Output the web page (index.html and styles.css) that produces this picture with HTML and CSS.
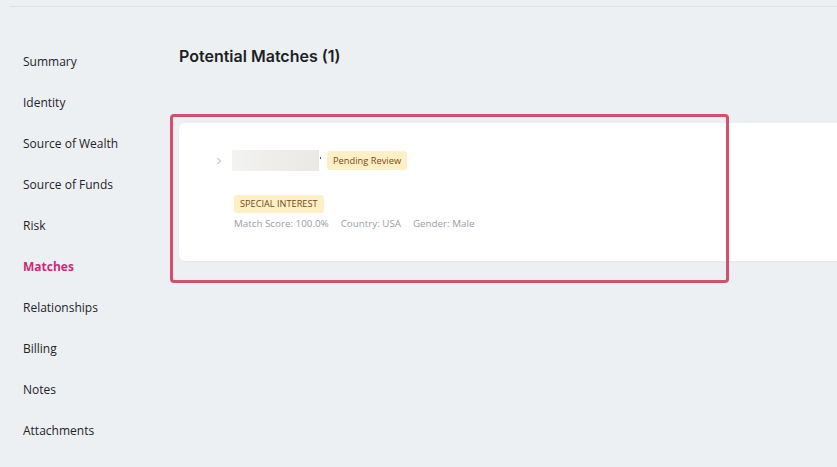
FILE: index.html
```html
<!DOCTYPE html>
<html lang="en">
<head>
    <meta charset="UTF-8">
    <meta name="viewport" content="width=device-width, initial-scale=1.0">
    <title>Matches</title>
    <link rel="stylesheet" href="styles.css">
</head>
<body>
    <div class="topbar"></div>
    <div class="layout">
        <nav class="sidebar">
            <a class="nav-item">Summary</a>
            <a class="nav-item">Identity</a>
            <a class="nav-item">Source of Wealth</a>
            <a class="nav-item">Source of Funds</a>
            <a class="nav-item">Risk</a>
            <a class="nav-item active">Matches</a>
            <a class="nav-item">Relationships</a>
            <a class="nav-item">Billing</a>
            <a class="nav-item">Notes</a>
            <a class="nav-item">Attachments</a>
        </nav>
        <main class="main">
            <h2 class="page-title">Potential Matches (1)</h2>
            <div class="matches">
                <div class="highlight"></div>
                <div class="match-card">
                    <div class="match-head">
                        <svg class="chevron" width="6" height="8" viewBox="0 0 6 8">
                            <polyline points="1.5,1 4.5,4 1.5,7" fill="none" stroke="#a3a7ad" stroke-width="1"/>
                        </svg>
                        <div class="name-blur"></div>
                        <span class="name-tail"></span>
                        <span class="badge">Pending Review</span>
                    </div>
                    <div class="match-body">
                        <span class="badge badge-caps">Special Interest</span>
                        <div class="meta">
                            <span>Match Score: 100.0%</span>
                            <span>Country: USA</span>
                            <span>Gender: Male</span>
                        </div>
                    </div>
                </div>
            </div>
        </main>
    </div>
</body>
</html>
```
FILE: styles.css
```css
body {
    font-family: "Open Sans", "Noto Sans", sans-serif;
    background-color: #edf0f3;
    margin: 0;
    height: 100vh;
    overflow: hidden;
    color: #1f2329;
}
.topbar {
    height: 6px;
    margin-left: 10px;
    border-bottom: 1px solid #dde0e4;
}
.layout {
    display: flex;
}
.sidebar {
    width: 156px;
    padding: 34px 0 0 23px;
    display: flex;
    flex-direction: column;
    flex-shrink: 0;
}
.nav-item {
    font-size: 12px;
    line-height: 41px;
    color: #1f2329;
}
.nav-item.active {
    color: #d0287a;
    font-weight: 700;
}
.main {
    flex: 1;
    padding-top: 37px;
    margin-right: -12px;
}
.page-title {
    margin: 0;
    font-family: Inter, sans-serif;
    font-size: 16px;
    line-height: 24px;
    font-weight: 600;
    color: #1c1f24;
}
.matches {
    position: relative;
    margin-top: 55px;
}
.highlight {
    position: absolute;
    top: -9px;
    left: -9px;
    width: 553px;
    height: 163px;
    border: 3px solid #d64f6a;
    border-radius: 4px;
    pointer-events: none;
}
.match-card {
    background: #fff;
    border-radius: 6px;
    padding: 27px 0 30px 37px;
    box-shadow: 0 1px 2px rgba(0, 0, 0, 0.03);
}
.match-head {
    display: flex;
    align-items: center;
    height: 21px;
}
.chevron {
    margin-right: 10px;
}
.name-blur {
    width: 87px;
    height: 21px;
    background: linear-gradient(90deg, #f3f3f2, #eeedea 50%, #ebe9e6);
    filter: blur(0.5px);
}
.name-tail {
    width: 1px;
    height: 2px;
    background: #555;
    margin: 0 6px 6px 1px;
}
.badge {
    display: inline-block;
    background: #fdf0c6;
    color: #7a4912;
    font-size: 9.3px;
    font-weight: 500;
    line-height: 19px;
    padding: 0 6px;
    border-radius: 3px;
}
.match-body {
    display: flex;
    flex-direction: column;
    align-items: flex-start;
    padding: 24px 0 0 18px;
}
.badge-caps {
    text-transform: uppercase;
    font-size: 9.2px;
    line-height: 18px;
}
.meta {
    display: flex;
    gap: 12px;
    font-size: 9.8px;
    line-height: 14px;
    color: #9a9ea5;
    margin-top: 4px;
}
```
